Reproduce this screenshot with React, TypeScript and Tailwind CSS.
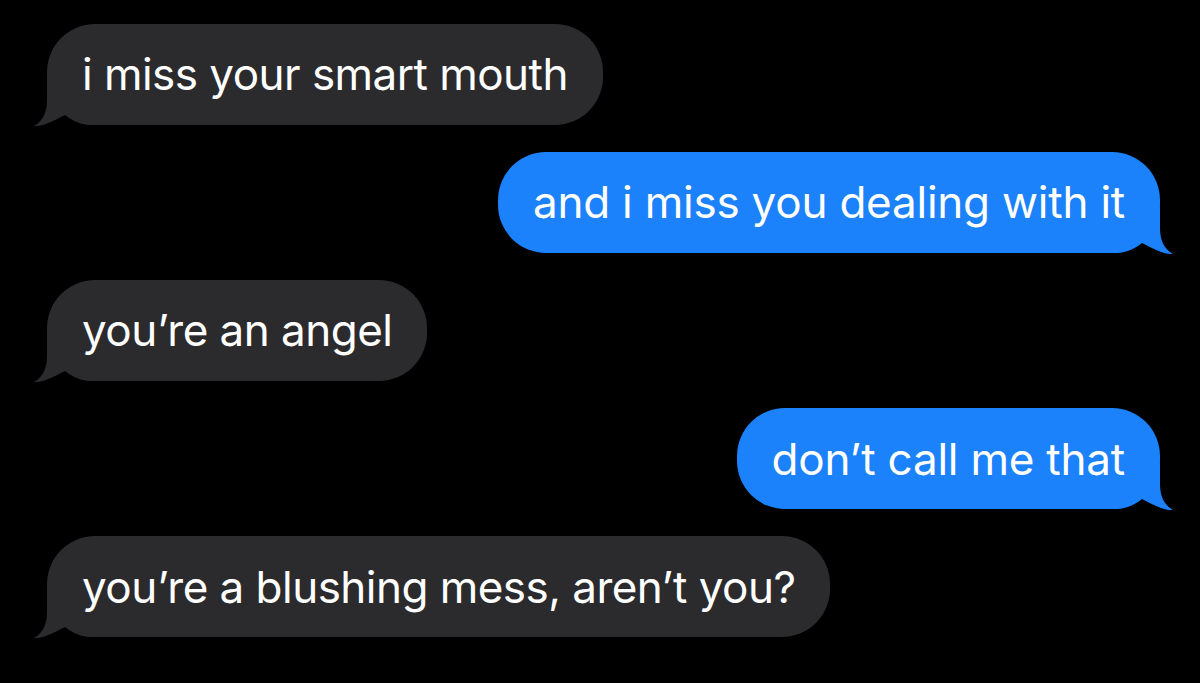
import React from "react";

type Msg = { text: string; me: boolean };

const messages: Msg[] = [
  { text: "i miss your smart mouth", me: false },
  { text: "and i miss you dealing with it", me: true },
  { text: "you\u2019re an angel", me: false },
  { text: "don\u2019t call me that", me: true },
  { text: "you\u2019re a blushing mess, aren\u2019t you?", me: false },
];

function Tail({ me }: { me: boolean }) {
  return (
    <svg
      width="62"
      height="50"
      viewBox="0 0 62 50"
      className={
        me
          ? "absolute right-[-14px] bottom-[-2px] -scale-x-100"
          : "absolute left-[-14px] bottom-[-2px]"
      }
    >
      <path
        d="M14 2 L14 23 C14 35 10 44 1 49 C10 50 22 43 32 38 C38 43 46 47 56 48 L60 48 L60 2 Z"
        fill={me ? "#1b82fb" : "#2b2b2d"}
      />
    </svg>
  );
}

function Bubble({ m }: { m: Msg }) {
  return (
    <div className={m.me ? "flex justify-end" : "flex justify-start"}>
      <div
        className={
          "relative flex h-[100.6px] items-center rounded-[48px] px-[35px] text-[44px] leading-none text-white " +
          (m.me ? "bg-[#1b82fb] tracking-[-0.22px]" : "bg-[#2b2b2d] tracking-[-0.53px]")
        }
      >
        <Tail me={m.me} />
        <span className="relative whitespace-nowrap">{m.text}</span>
      </div>
    </div>
  );
}

export default function App() {
  return (
    <div
      className="flex h-[683px] w-[1200px] flex-col gap-[27.5px] overflow-hidden bg-black pl-[47px] pr-[40px] pt-[24px]"
      style={{ fontFamily: "Inter, 'Noto Sans', sans-serif" }}
    >
      {messages.map((m, i) => (
        <Bubble key={i} m={m} />
      ))}
    </div>
  );
}
